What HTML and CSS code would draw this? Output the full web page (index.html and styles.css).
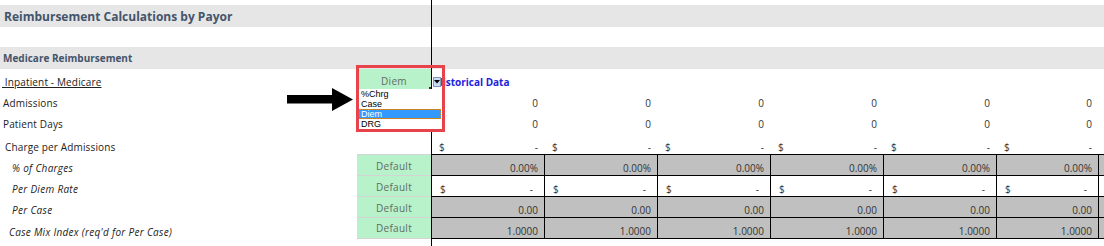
FILE: index.html
```html
<!doctype html>
<html lang="en">
    <head>
        <meta charset="UTF-8" />
        <title>Reimbursement Calculations by Payor</title>
        <link rel="stylesheet" href="styles.css">
    </head>
    <body>
        <div class="sheet">
            <div class="band band-title">Reimbursement Calculations by Payor</div>
            <div class="band band-section">Medicare Reimbursement</div>

            <!-- Inpatient header row -->
            <div class="row row-inpatient">
                <div class="label label-ul">&nbsp;Inpatient - Medicare</div>
                <div class="code code-diem">Diem</div>
                <div class="cell note">Historical Data</div>
            </div>

            <!-- Counts -->
            <div class="row row-count">
                <div class="label">Admissions</div>
                <div class="code"></div>
                <div class="cell num">0</div>
                <div class="cell num">0</div>
                <div class="cell num">0</div>
                <div class="cell num">0</div>
                <div class="cell num">0</div>
                <div class="cell num">0</div>
            </div>
            <div class="row row-count">
                <div class="label">Patient Days</div>
                <div class="code"></div>
                <div class="cell num">0</div>
                <div class="cell num">0</div>
                <div class="cell num">0</div>
                <div class="cell num">0</div>
                <div class="cell num">0</div>
                <div class="cell num">0</div>
            </div>
            <div class="row row-charge">
                <div class="label label-charge">Charge per Admissions</div>
                <div class="code"></div>
                <div class="cell money"><span>$</span><span class="dash">-</span></div>
                <div class="cell money"><span>$</span><span class="dash">-</span></div>
                <div class="cell money"><span>$</span><span class="dash">-</span></div>
                <div class="cell money"><span>$</span><span class="dash">-</span></div>
                <div class="cell money"><span>$</span><span class="dash">-</span></div>
                <div class="cell money"><span>$</span><span class="dash">-</span></div>
            </div>

            <!-- Rate inputs -->
            <div class="row row-grid">
                <div class="label label-sub">% of Charges</div>
                <div class="code code-default">Default</div>
                <div class="cell box gray num">0.00%</div>
                <div class="cell box gray num">0.00%</div>
                <div class="cell box gray num">0.00%</div>
                <div class="cell box gray num">0.00%</div>
                <div class="cell box gray num">0.00%</div>
                <div class="cell box gray num">0.00%</div>
                <div class="cell box gray"></div>
            </div>
            <div class="row row-grid">
                <div class="label label-sub">Per Diem Rate</div>
                <div class="code code-default">Default</div>
                <div class="cell box money"><span>$</span><span class="dash dash-in">-</span></div>
                <div class="cell box money"><span>$</span><span class="dash dash-in">-</span></div>
                <div class="cell box money"><span>$</span><span class="dash dash-in">-</span></div>
                <div class="cell box money"><span>$</span><span class="dash dash-in">-</span></div>
                <div class="cell box money"><span>$</span><span class="dash dash-in">-</span></div>
                <div class="cell box money"><span>$</span><span class="dash dash-in">-</span></div>
                <div class="cell box"></div>
            </div>
            <div class="row row-grid">
                <div class="label label-sub">Per Case</div>
                <div class="code code-default">Default</div>
                <div class="cell box gray num">0.00</div>
                <div class="cell box gray num">0.00</div>
                <div class="cell box gray num">0.00</div>
                <div class="cell box gray num">0.00</div>
                <div class="cell box gray num">0.00</div>
                <div class="cell box gray num">0.00</div>
                <div class="cell box gray"></div>
            </div>
            <div class="row row-grid row-last">
                <div class="label label-sub label-cmi">Case Mix Index (req'd for Per Case)</div>
                <div class="code code-default">Default</div>
                <div class="cell box gray num">1.0000</div>
                <div class="cell box gray num">1.0000</div>
                <div class="cell box gray num">1.0000</div>
                <div class="cell box gray num">1.0000</div>
                <div class="cell box gray num">1.0000</div>
                <div class="cell box gray num">1.0000</div>
                <div class="cell box gray"></div>
            </div>

            <!-- Frozen pane divider -->
            <div class="freeze-line"></div>

            <!-- Callout: arrow + highlighted dropdown -->
            <svg class="callout-arrow" width="68" height="23" viewBox="0 0 68 23">
                <polygon points="1,7 46,7 46,0 67,11.5 46,23 46,15.5 1,15.5" fill="#000" />
            </svg>
            <div class="callout-box"></div>
            <div class="drop-btn">
                <svg width="6" height="4" viewBox="0 0 6 4"><polygon points="0,0 6,0 3,3.5" fill="#000" /></svg>
            </div>
            <ul class="drop-list">
                <li>%Chrg</li>
                <li>Case</li>
                <li class="selected">Diem</li>
                <li>DRG</li>
            </ul>
        </div>
    </body>
</html>
```

FILE: styles.css
```css
body {
    margin: 0;
    background: #fff;
    font-family: "Open Sans", sans-serif;
    font-size: 10px;
    color: #222;
}
.sheet {
    position: relative;
    width: 1104px;
    height: 246px;
    overflow: hidden;
}
.band {
    display: flex;
    align-items: center;
    height: 22px;
    background: #e6e6e6;
    color: #44546a;
    font-weight: bold;
    padding-left: 4px;
}
.band-title {
    margin-top: 5px;
    font-size: 12px;
    letter-spacing: 0;
}
.band-section {
    margin-top: 20px;
    font-size: 10px;
    letter-spacing: 0;
    padding-left: 3px;
}
.row {
    display: grid;
    grid-template-columns: 357px 74px 113px 113px 113px 113px 113px 102px 20px;
    height: 21px;
    line-height: 13px;
}
.row > div {
    display: flex;
    align-items: flex-end;
    box-sizing: border-box;
    white-space: nowrap;
}
.row-inpatient {
    height: 20px;
}
.row-charge {
    height: 23px;
}
.label {
    padding-left: 3px;
    letter-spacing: 0.15px;
}
.label-ul {
    padding-left: 2px;
    text-decoration: underline;
}
.label-charge {
    padding-left: 5px;
}
.label-sub {
    padding-left: 12px;
    font-style: italic;
    letter-spacing: 0.3px;
}
.label-cmi {
    padding-left: 9px;
}
.code {
    justify-content: center;
    color: #626b66;
    letter-spacing: 0.3px;
}
.code-diem {
    position: relative;
    background: #b8f2ca;
    padding-bottom: 1px;
}
.code-diem::after {
    content: "";
    position: absolute;
    right: 0;
    bottom: 0;
    width: 2px;
    height: 2px;
    background: #333;
}
.code-default {
    background: #b8f2ca;
    border-top: 1px solid #d4d4d4;
    padding-bottom: 2px;
}
.row-last .code-default {
    border-bottom: 1px solid #d4d4d4;
    padding-bottom: 3px;
}
.cell {
    color: #333;
}
.num {
    justify-content: flex-end;
    padding-right: 6px;
}
.money {
    justify-content: space-between;
    padding-left: 8px;
    padding-right: 6px;
}
.dash-in {
    padding-right: 5px;
}
.note {
    padding-left: 4px;
    color: #2222dd;
    font-weight: bold;
    overflow: visible;
}
.box {
    border-left: 1px solid #000;
    border-top: 1px solid #000;
    background: #fff;
}
.gray {
    background: #c0c0c0;
}
.row-last {
    height: 22px;
}
.row-last .box {
    border-bottom: 1px solid #000;
}
.freeze-line {
    position: absolute;
    left: 431px;
    top: 0;
    width: 1px;
    height: 246px;
    background: #000;
}
.callout-arrow {
    position: absolute;
    left: 286px;
    top: 88px;
}
.callout-box {
    position: absolute;
    left: 356px;
    top: 65px;
    width: 83px;
    height: 61px;
    border: 3px solid #e8434a;
}
.drop-btn {
    position: absolute;
    left: 433px;
    top: 77px;
    width: 8px;
    height: 10px;
    box-sizing: border-box;
    background: #c7dcf4;
    border: 1px solid #7f9db9;
    display: flex;
    align-items: center;
    justify-content: center;
}
.drop-btn svg {
    display: block;
}
.drop-list {
    position: absolute;
    left: 359px;
    top: 89px;
    width: 82px;
    margin: 0;
    padding: 0;
    list-style: none;
    background: #fff;
    font-family: "Liberation Sans", Arial, sans-serif;
    font-size: 9px;
    color: #000;
}
.drop-list li {
    height: 10px;
    line-height: 10px;
    padding-left: 2px;
    box-sizing: border-box;
}
.drop-list .selected {
    background: #3399ff;
    color: #fff;
    outline: 1px dotted #d08a2a;
    outline-offset: -1px;
}
```
